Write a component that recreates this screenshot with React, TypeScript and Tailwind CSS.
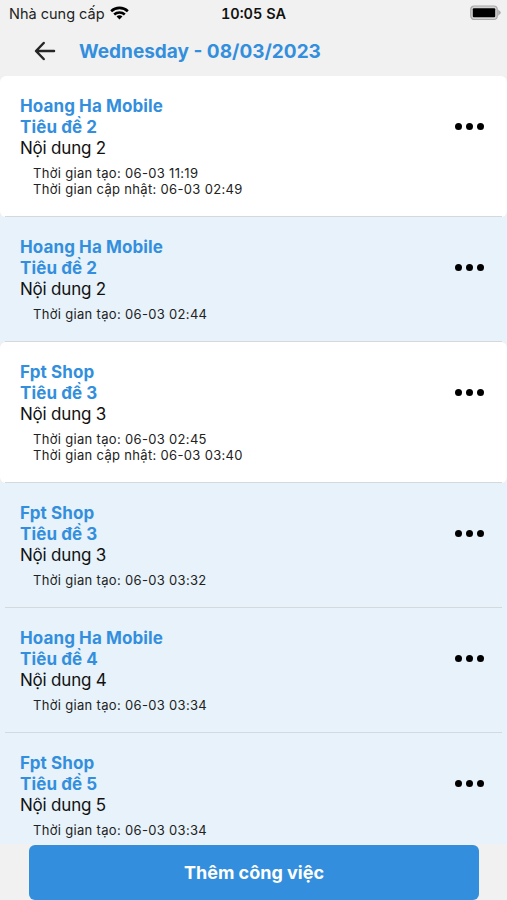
import clsx from 'clsx';

interface Task {
  id: number;
  customer: string;
  title: string;
  content: string;
  createdAt: string;
  updatedAt?: string;
}

const tasks: Task[] = [
  { id: 1, customer: 'Hoang Ha Mobile', title: 'Tiêu đề 2', content: 'Nội dung 2', createdAt: '06-03 11:19', updatedAt: '06-03 02:49' },
  { id: 2, customer: 'Hoang Ha Mobile', title: 'Tiêu đề 2', content: 'Nội dung 2', createdAt: '06-03 02:44' },
  { id: 3, customer: 'Fpt Shop', title: 'Tiêu đề 3', content: 'Nội dung 3', createdAt: '06-03 02:45', updatedAt: '06-03 03:40' },
  { id: 4, customer: 'Fpt Shop', title: 'Tiêu đề 3', content: 'Nội dung 3', createdAt: '06-03 03:32' },
  { id: 5, customer: 'Hoang Ha Mobile', title: 'Tiêu đề 4', content: 'Nội dung 4', createdAt: '06-03 03:34' },
  { id: 6, customer: 'Fpt Shop', title: 'Tiêu đề 5', content: 'Nội dung 5', createdAt: '06-03 03:34' },
];

function WifiIcon() {
  return (
    <svg width="19" height="14.5" viewBox="0 0 20 15" fill="none" stroke="#000" strokeWidth="2.7" className="-mt-[2px]">
      <path d="M1.2 5.4C6.1 0.7 13.9 0.7 18.8 5.4" />
      <path d="M4.4 8.8C7.5 5.9 12.5 5.9 15.6 8.8" />
      <path d="M10 14L6.9 10.9C8.6 9.3 11.4 9.3 13.1 10.9Z" fill="#000" stroke="none" />
    </svg>
  );
}

function BatteryIcon() {
  return (
    <svg width="32" height="16" viewBox="0 0 32 16" className="-mt-[2px]">
      <rect x="0.75" y="1" width="26.5" height="13.5" rx="3.5" fill="#d2d2d2" stroke="#a9a9a9" strokeWidth="1.2" />
      <rect x="2.8" y="3.2" width="22.4" height="9" rx="1" fill="#000" />
      <path d="M28.2 4.6C29 5.8 30.8 6.6 30.8 7.8S29 9.8 28.2 11Z" fill="#a9a9a9" />
    </svg>
  );
}

function StatusBar() {
  return (
    <div className="grid h-7 grid-cols-3 items-center pr-[5px] pl-[9px] text-[14.5px]">
      <div className="flex items-center gap-[5px] text-[#222]">
        <span className="whitespace-nowrap">Nhà cung cấp</span>
        <WifiIcon />
      </div>
      <div className="pr-[4px] text-center font-semibold text-[#111] tabular-nums">10:05 SA</div>
      <div className="flex justify-end">
        <BatteryIcon />
      </div>
    </div>
  );
}

function Header() {
  return (
    <header className="flex h-12 items-center pb-[2px] pl-[34px]">
      <button className="mr-[23px]">
        <svg width="22" height="20" viewBox="0 0 22 20" fill="none" stroke="#262626" strokeWidth="2.5" strokeLinecap="round" strokeLinejoin="round">
          <path d="M9.7 2L2 10L9.7 18M2.4 10H20" />
        </svg>
      </button>
      <h1 className="pt-[2px] text-[19px] font-bold text-[#338fdd]">Wednesday - 08/03/2023</h1>
    </header>
  );
}

function TaskItem({ task }: { task: Task }) {
  const edited = Boolean(task.updatedAt);

  return (
    <div className={clsx('shrink-0', edited ? 'bg-[#f0f0f0]' : 'bg-[#e7f2fa]')}>
      <div
        className={clsx(
          'flex pt-[20px] pr-[23px] pb-[19.7px] pl-5',
          edited ? 'rounded-[6px] bg-white' : 'bg-[#e7f2fa]',
        )}
      >
        <div className="flex-1">
          <div className="text-[17px] leading-[20.8px]">
            <p className="font-bold tracking-[0.1px] text-[#338fdd]">{task.customer}</p>
            <p className="font-bold tracking-[0.1px] text-[#338fdd]">{task.title}</p>
            <p className="tracking-[-0.2px] text-[#111]">{task.content}</p>
          </div>
          <div className="mt-[6.5px] pl-[13px] text-[13px] leading-[16.3px] tracking-[0.32px] text-[#222]">
            <p>Thời gian tạo: {task.createdAt}</p>
            {task.updatedAt && <p>Thời gian cập nhật: {task.updatedAt}</p>}
          </div>
        </div>
        <button className="mt-[27px] flex h-[7px] gap-[3.8px]">
          <span className="size-[7px] rounded-full bg-black" />
          <span className="size-[7px] rounded-full bg-black" />
          <span className="size-[7px] rounded-full bg-black" />
        </button>
      </div>
      <div className="relative mx-[5px] -mt-px h-px bg-[#d3d9dd]" />
    </div>
  );
}

export default function App() {
  return (
    <div className="flex h-[900px] w-[507px] flex-col overflow-hidden bg-[#f1f1f1] font-['Inter','Liberation_Sans',sans-serif]">
      <StatusBar />
      <Header />
      <main className="flex h-[768px] flex-col overflow-hidden">
        {tasks.map((task) => (
          <TaskItem key={task.id} task={task} />
        ))}
      </main>
      <div className="pt-px pr-[28px] pl-[29px]">
        <button className="h-[55px] w-full rounded-[6px] bg-[#338fdd] text-[18px] font-bold text-white">
          Thêm công việc
        </button>
      </div>
    </div>
  );
}
